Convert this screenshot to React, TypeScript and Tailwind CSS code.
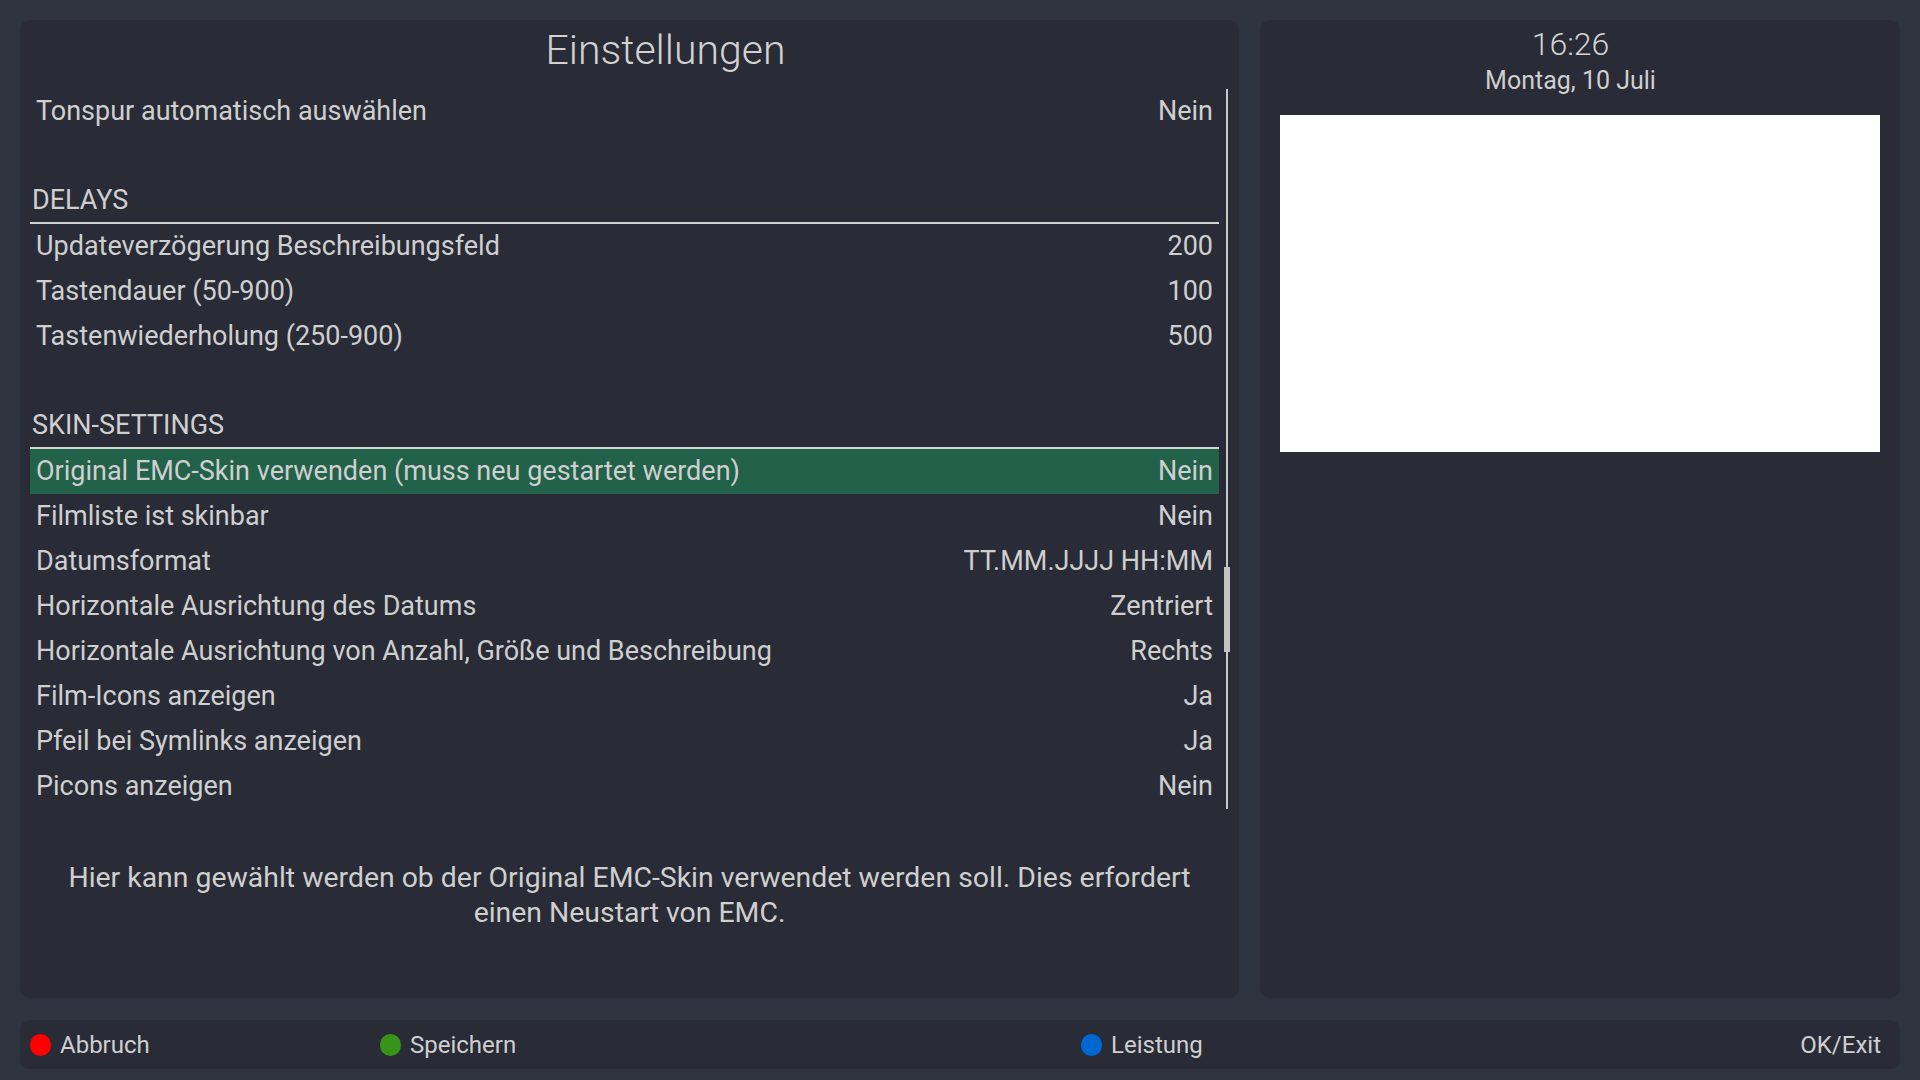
type Row =
  | { kind: 'item'; label: string; value: string; selected?: boolean }
  | { kind: 'header'; label: string }
  | { kind: 'spacer' };

const rows: Row[] = [
  { kind: 'item', label: 'Tonspur automatisch auswählen', value: 'Nein' },
  { kind: 'spacer' },
  { kind: 'header', label: 'DELAYS' },
  { kind: 'item', label: 'Updateverzögerung Beschreibungsfeld', value: '200' },
  { kind: 'item', label: 'Tastendauer (50-900)', value: '100' },
  { kind: 'item', label: 'Tastenwiederholung (250-900)', value: '500' },
  { kind: 'spacer' },
  { kind: 'header', label: 'SKIN-SETTINGS' },
  { kind: 'item', label: 'Original EMC-Skin verwenden (muss neu gestartet werden)', value: 'Nein', selected: true },
  { kind: 'item', label: 'Filmliste ist skinbar', value: 'Nein' },
  { kind: 'item', label: 'Datumsformat', value: 'TT.MM.JJJJ HH:MM' },
  { kind: 'item', label: 'Horizontale Ausrichtung des Datums', value: 'Zentriert' },
  { kind: 'item', label: 'Horizontale Ausrichtung von Anzahl, Größe und Beschreibung', value: 'Rechts' },
  { kind: 'item', label: 'Film-Icons anzeigen', value: 'Ja' },
  { kind: 'item', label: 'Pfeil bei Symlinks anzeigen', value: 'Ja' },
  { kind: 'item', label: 'Picons anzeigen', value: 'Nein' },
];

function ListRow({ row }: { row: Row }) {
  if (row.kind === 'spacer') return <div className="h-[45px]" />;
  if (row.kind === 'header') {
    return (
      <div className="h-[45px] flex items-center pl-[2px] border-b-2 border-[#d2d2d2] text-[27px] text-[#cfcfcf]">
        {row.label}
      </div>
    );
  }
  return (
    <div
      className={`h-[45px] flex items-center justify-between px-[6px] text-[27px] text-[#cfcfcf] ${
        row.selected ? 'bg-[#22614a]' : ''
      }`}
    >
      <span>{row.label}</span>
      <span>{row.value}</span>
    </div>
  );
}

function KeyHint({ color, label, width }: { color: string; label: string; width: string }) {
  return (
    <div className={`flex items-center gap-[9px] ${width}`}>
      <span className={`w-[21px] h-[22px] rounded-full ${color}`} />
      <span>{label}</span>
    </div>
  );
}

export default function App() {
  return (
    <div
      className="w-[1920px] h-[1080px] bg-[#2d333f] px-[20px] pt-[20px] pb-[11px] flex flex-col gap-[22px] overflow-hidden"
      style={{ fontFamily: 'Roboto, "Noto Sans", sans-serif' }}
    >
      <div className="flex gap-[21px] h-[978px] shrink-0">
        {/* Settings panel */}
        <div className="w-[1219px] bg-[#292b36] rounded-[10px] flex flex-col">
          <div className="h-[60px] leading-[60px] pl-[72px] text-center text-[41px] font-light text-[#d2d2d2]">
            Einstellungen
          </div>
          <div className="mt-[9px] ml-[10px] flex">
            <div className="w-[1189px] flex flex-col">
              {rows.map((row, i) => (
                <ListRow key={i} row={row} />
              ))}
            </div>
            <div className="ml-[5px] w-[6px] h-[720px] flex justify-center relative">
              <div className="w-[2px] h-full bg-[#c8c8c8]" />
              <div className="absolute left-0 top-[478px] w-[6px] h-[85px] bg-[#c4c4c4]" />
            </div>
          </div>
          <p className="mt-[51px] text-center text-[28.4px] leading-[35px] text-[#cfcfcf]">
            Hier kann gewählt werden ob der Original EMC-Skin verwendet werden soll. Dies erfordert
            <br />
            einen Neustart von EMC.
          </p>
        </div>

        {/* Clock / preview panel */}
        <div className="flex-1 bg-[#292b36] rounded-[10px] px-[20px] pt-[4px] flex flex-col">
          <div className="pr-[19px] text-center">
            <div className="text-[32px] leading-[40px] font-light text-[#d2d2d2]">16:26</div>
            <div className="mt-[2px] text-[25px] leading-[30px] text-[#cfcfcf]">Montag, 10 Juli</div>
          </div>
          <div className="mt-[19px] w-[600px] h-[337px] bg-white" />
        </div>
      </div>

      {/* Button bar */}
      <div className="h-[49px] shrink-0 bg-[#292b36] rounded-[10px] pl-[10px] pr-[19px] flex items-center text-[24px] text-[#cfcfcf]">
        <KeyHint color="bg-[#ff0000]" label="Abbruch" width="w-[350px]" />
        <KeyHint color="bg-[#389418]" label="Speichern" width="w-[701px]" />
        <KeyHint color="bg-[#0066d0]" label="Leistung" width="flex-1" />
        <span>OK/Exit</span>
      </div>
    </div>
  );
}
